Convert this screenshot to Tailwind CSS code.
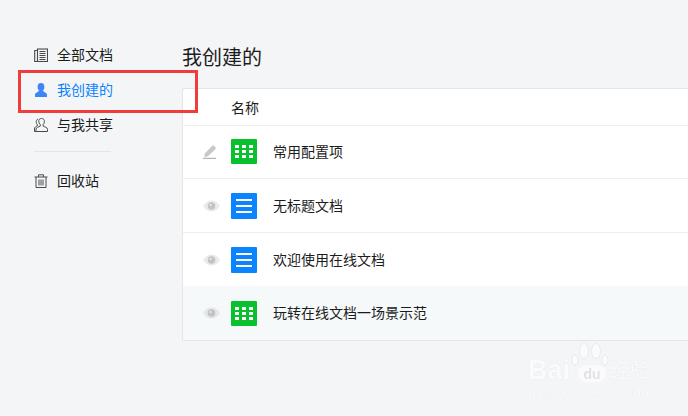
<!DOCTYPE html>
<html lang="zh">
<head>
<meta charset="utf-8">
<script src="https://cdn.jsdelivr.net/npm/@tailwindcss/browser@4"></script>
</head>
<body class="m-0 h-[416px] w-[688px] overflow-hidden bg-[#f4f5f7] font-['Noto_Sans_CJK_SC','Noto_Sans',sans-serif] text-[14px] text-[#1c1c1c]">
<div class="relative flex h-[416px] w-[688px] overflow-hidden">
  <!-- sidebar -->
  <aside class="w-[182px] shrink-0 pt-[37px]">
    <div class="flex h-[35px] items-center gap-[9px] pl-[34px]">
      <svg class="h-[14px] w-[14px]" viewBox="0 0 14 14" fill="none" stroke="#4a4a4a" stroke-width="1.100"><rect x="3.500" y="1" width="10" height="12.500"/><path d="M3.500 2.500H.7v11h2.800M5.500 3.500h6M5.500 5.500h6M5.500 7.500h6M5.500 9.500h6M5.500 11.500h6"/></svg>
      <span class="mb-[2px] leading-none">全部文档</span>
    </div>
    <div class="flex h-[35px] items-center gap-[9px] pl-[34px] text-[#0a84ff]">
      <svg class="h-[14px] w-[14px]" viewBox="0 0 14 14" fill="#3d85f5"><ellipse cx="7" cy="4" rx="3.400" ry="4"/><path d="M1 14v-2.500C1 10 4 9.500 5 7.500h4c1 2 4 2.500 4 4V14z"/></svg>
      <span class="mb-[2px] leading-none">我创建的</span>
    </div>
    <div class="flex h-[35px] items-center gap-[9px] pl-[34px]">
      <svg class="h-[14px] w-[14px]" viewBox="0 0 14 14" fill="none" stroke="#4a4a4a" stroke-width="1"><path d="M4.800 2.500C5.200 1 6.300.5 7.500.5s2.500.5 2.800 2c.3 1.500-.2 3.300-1.200 4.200v1.400c1.300.8 4.400 1.100 4.400 3.200v2.200H2v-2.200c0-2.100 3-2.400 4.300-3.200V6.700c-1-.9-1.800-2.700-1.500-4.200z"/><path d="M4.200 1C2.500 1.500 2 3 2.300 4.500c.2 1 .5 1.700 1 2.200v1.200C2 8.600.5 9 .5 11v2.500H2"/></svg>
      <span class="mb-[2px] leading-none">与我共享</span>
    </div>
    <div class="ml-[34px] mt-[9px] h-px w-[77px] bg-[#e3e5e8]"></div>
    <div class="mt-[11px] flex h-[35px] items-center gap-[9px] pl-[34px]">
      <svg class="h-[14px] w-[14px]" viewBox="0 0 14 14" fill="none" stroke="#4a4a4a" stroke-width="1"><path d="M.5 3h13M4.500 3V.8h5V3M2 3v10.500h10V3M5 5.500v6M7 5.500v6M9 5.500v6"/></svg>
      <span class="mb-[2px] leading-none">回收站</span>
    </div>
  </aside>

  <!-- main -->
  <main class="min-w-0 flex-1">
    <h1 class="m-0 mt-[43px] h-[45px] text-[20px] font-normal leading-[28px]">我创建的</h1>
    <div class="w-[520px] rounded-[2px] border border-r-0 border-[#e3e5e8] bg-white">
      <div class="flex h-[36px] items-center pl-[48px] leading-none">名称</div>
      <div class="flex h-[53px] items-center border-t border-[#eeeff1] pb-[1px] pl-[20px]">
        <svg class="h-[14px] w-[14px]" viewBox="0 0 14 14"><path d="M1.800 8.500 9 1c.7-.6 1.500-.6 2.300 0l1 1c.7.800.6 1.500 0 2.200L5 11.300l-3.600.9z" fill="#c8c8c8"/><path d="M0 13.400h13" stroke="#b4b4b4" stroke-width="1.200"/></svg>
        <span class="ml-[14px] flex h-[25px] w-[26px] items-center justify-center rounded-[1px] bg-[#09c02d]">
          <span class="grid grid-cols-3 gap-x-[3px] gap-y-[2px]"><i class="h-[3px] w-[4px] bg-white"></i><i class="h-[3px] w-[4px] bg-white"></i><i class="h-[3px] w-[4px] bg-white"></i><i class="h-[3px] w-[4px] bg-white"></i><i class="h-[3px] w-[4px] bg-white"></i><i class="h-[3px] w-[4px] bg-white"></i><i class="h-[3px] w-[4px] bg-white"></i><i class="h-[3px] w-[4px] bg-white"></i><i class="h-[3px] w-[4px] bg-white"></i></span>
        </span>
        <span class="mb-[2px] ml-[16px] leading-none">常用配置项</span>
      </div>
      <div class="flex h-[54px] items-center border-t border-[#eeeff1] pl-[20px]">
        <svg class="h-[14px] w-[17px]" viewBox="0 0 17 14"><path d="M0 7c2-3.500 5-5.500 8.500-5.500S15 3.500 17 7c-2 3.500-5 5.500-8.500 5.500S2 10.500 0 7z" fill="#ebebeb"/><circle cx="8.500" cy="7" r="3.800" fill="#c4c4c4"/><circle cx="7.500" cy="6" r="1.100" fill="#eee"/></svg>
        <span class="ml-[11px] flex h-[26px] w-[26px] flex-col items-center justify-center gap-[4px] rounded-[1px] bg-[#0a84ff]"><i class="h-[2px] w-[16px] bg-white"></i><i class="h-[2px] w-[16px] bg-white"></i><i class="h-[2px] w-[16px] bg-white"></i></span>
        <span class="mb-[2px] ml-[16px] leading-none">无标题文档</span>
      </div>
      <div class="flex h-[54px] items-center border-t border-[#eeeff1] pl-[20px]">
        <svg class="h-[14px] w-[17px]" viewBox="0 0 17 14"><path d="M0 7c2-3.500 5-5.500 8.500-5.500S15 3.500 17 7c-2 3.500-5 5.500-8.500 5.500S2 10.500 0 7z" fill="#ebebeb"/><circle cx="8.500" cy="7" r="3.800" fill="#c4c4c4"/><circle cx="7.500" cy="6" r="1.100" fill="#eee"/></svg>
        <span class="ml-[11px] flex h-[26px] w-[26px] flex-col items-center justify-center gap-[4px] rounded-[1px] bg-[#0a84ff]"><i class="h-[2px] w-[16px] bg-white"></i><i class="h-[2px] w-[16px] bg-white"></i><i class="h-[2px] w-[16px] bg-white"></i></span>
        <span class="mb-[2px] ml-[16px] leading-none">欢迎使用在线文档</span>
      </div>
      <div class="flex h-[54px] items-center bg-[#f6f9fa] pl-[20px]">
        <svg class="h-[14px] w-[17px]" viewBox="0 0 17 14"><path d="M0 7c2-3.500 5-5.500 8.500-5.500S15 3.500 17 7c-2 3.500-5 5.500-8.500 5.500S2 10.500 0 7z" fill="#e6e6e6"/><circle cx="8.500" cy="7" r="3.800" fill="#c4c4c4"/><circle cx="7.500" cy="6" r="1.100" fill="#eee"/></svg>
        <span class="ml-[11px] flex h-[25px] w-[26px] items-center justify-center rounded-[1px] bg-[#09c02d]">
          <span class="grid grid-cols-3 gap-x-[3px] gap-y-[2px]"><i class="h-[3px] w-[4px] bg-white"></i><i class="h-[3px] w-[4px] bg-white"></i><i class="h-[3px] w-[4px] bg-white"></i><i class="h-[3px] w-[4px] bg-white"></i><i class="h-[3px] w-[4px] bg-white"></i><i class="h-[3px] w-[4px] bg-white"></i><i class="h-[3px] w-[4px] bg-white"></i><i class="h-[3px] w-[4px] bg-white"></i><i class="h-[3px] w-[4px] bg-white"></i></span>
        </span>
        <span class="mb-[2px] ml-[16px] leading-none">玩转在线文档一场景示范</span>
      </div>
    </div>
  </main>

  <!-- red annotation -->
  <div class="absolute left-[18px] top-[70px] h-[43px] w-[180px] border-[3px] border-[#f23c3c]"></div>

  <!-- watermark -->
  <div class="absolute left-[528px] top-[342px] w-[125px] text-[#fbfbfc] blur-[0.4px] [text-shadow:0_0_1px_#dcdee1]">
    <div class="flex h-[40px] items-end font-['Liberation_Sans',sans-serif] text-[27px] font-bold leading-[24px]">
      <span>Bai</span>
      <span class="relative ml-[8px] flex h-[17px] w-[28px] items-center justify-center rounded-[9px] bg-[#fbfbfc] text-[14px] leading-none text-[#e0e2e5] [text-shadow:none]">du
        <svg class="absolute left-[-7px] top-[-22px] h-[24px] w-[38px]" viewBox="0 0 38 24" fill="#fbfbfc" stroke="#e4e6e9" stroke-width=".8"><ellipse cx="4" cy="17" rx="3" ry="5"/><ellipse cx="13" cy="8" rx="4.500" ry="7.500"/><ellipse cx="25" cy="8" rx="4.500" ry="7.500"/><ellipse cx="34" cy="17" rx="3" ry="5"/></svg>
      </span>
      <span class="ml-[4px] font-['Noto_Sans_CJK_SC',sans-serif] text-[20px] font-normal leading-[24px]">经验</span>
    </div>
    <div class="mt-[3px] font-['Liberation_Sans',sans-serif] text-[13px] leading-[14px] tracking-[1px]">jingyan.baidu.com</div>
  </div>
</div>
</body>
</html>
